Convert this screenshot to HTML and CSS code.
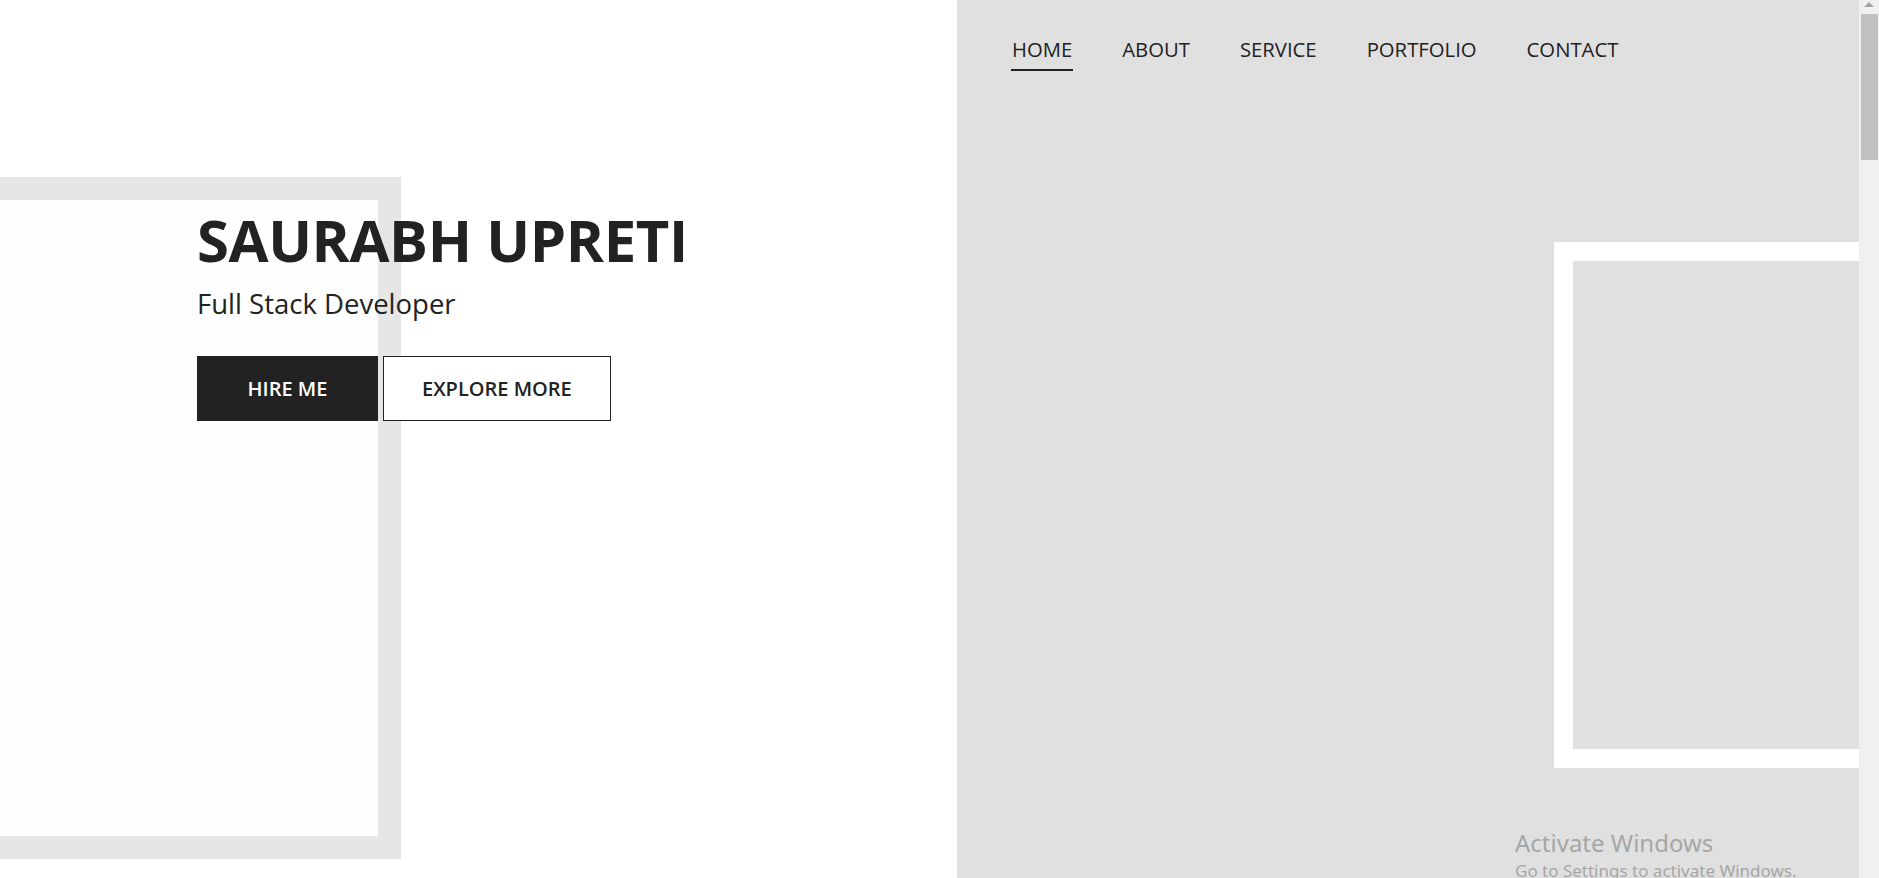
FILE: index.html
```html
<!DOCTYPE html>
<html lang="en">
<head>
<meta charset="utf-8">
<title>Saurabh Upreti</title>
<link rel="stylesheet" href="styles.css">
</head>
<body>
<div class="page">
  <section class="hero-left">
    <div class="frame-left"></div>
    <div class="intro">
      <h1 class="name">SAURABH UPRETI</h1>
      <p class="role">Full Stack Developer</p>
      <div class="actions">
        <a class="btn btn-primary" href="#">HIRE ME</a>
        <a class="btn btn-outline" href="#">EXPLORE MORE</a>
      </div>
    </div>
  </section>
  <section class="hero-right">
    <nav class="nav">
      <a class="nav-link active" href="#">HOME</a>
      <a class="nav-link" href="#">ABOUT</a>
      <a class="nav-link" href="#">SERVICE</a>
      <a class="nav-link" href="#">PORTFOLIO</a>
      <a class="nav-link" href="#">CONTACT</a>
    </nav>
    <div class="frame-right"></div>
    <div class="activate">
      <div class="activate-title">Activate Windows</div>
      <div class="activate-sub">Go to Settings to activate Windows.</div>
    </div>
  </section>
  <div class="scrollbar">
    <div class="scroll-arrow"></div>
    <div class="scroll-thumb"></div>
  </div>
</div>
</body>
</html>
```
FILE: styles.css
```css
* { box-sizing: border-box; }
html, body { margin: 0; padding: 0; }
body {
  font-family: "Open Sans", "Liberation Sans", sans-serif;
  color: #222;
  background: #fff;
  overflow: hidden;
}
.page {
  display: flex;
  width: 1879px;
  height: 878px;
  overflow: hidden;
}
.hero-left {
  position: relative;
  width: 957px;
  flex: none;
  background: #fff;
}
.frame-left {
  position: absolute;
  left: -40px;
  top: 177px;
  width: 441px;
  height: 682px;
  border: 23px solid #e6e6e6;
  border-left: none;
  background: #fefefe;
}
.intro {
  position: relative;
  padding: 200px 0 0 197px;
}
.name {
  margin: 0;
  font-size: 58px;
  font-weight: 700;
  letter-spacing: -0.4px;
  line-height: normal;
  color: #222;
}
.role {
  margin: 6px 0 0;
  font-size: 27.5px;
  font-weight: 400;
  line-height: normal;
  color: #222;
}
.actions {
  display: flex;
  gap: 5px;
  margin-top: 34px;
}
.btn {
  display: flex;
  align-items: center;
  justify-content: center;
  height: 65px;
  padding: 0 38px;
  font-size: 20px;
  font-weight: 600;
  text-decoration: none;
  border: 1px solid #222;
}
.btn-primary {
  min-width: 181px;
  background: #222;
  color: #fff;
}
.btn-outline {
  background: #fff;
  color: #222;
}
.hero-right {
  position: relative;
  flex: 1;
  background: #e0e0e0;
  overflow: hidden;
}
.nav {
  display: flex;
  gap: 50px;
  padding: 35px 0 0 55px;
}
.nav-link {
  position: relative;
  font-size: 20.3px;
  font-weight: 400;
  line-height: normal;
  color: #222;
  text-decoration: none;
  padding-bottom: 8px;
}
.nav-link.active::after {
  content: "";
  position: absolute;
  left: -1px;
  right: -1px;
  bottom: 0;
  height: 2px;
  background: #222;
}
.frame-right {
  position: absolute;
  left: 597px;
  top: 242px;
  width: 400px;
  height: 526px;
  border: 19px solid #fff;
  background: #e0e0e0;
}
.activate {
  position: absolute;
  left: 558px;
  top: 827px;
  color: #a6a6a6;
  font-family: "Noto Sans", "Open Sans", sans-serif;
}
.activate-title {
  font-size: 24px;
  line-height: 32px;
}
.activate-sub {
  font-size: 17px;
  line-height: 24px;
}
.scrollbar {
  position: relative;
  width: 20px;
  flex: none;
  background: #f0f0f0;
}
.scroll-arrow {
  position: absolute;
  left: 5px;
  top: 2px;
  width: 0;
  height: 0;
  border-left: 5px solid transparent;
  border-right: 5px solid transparent;
  border-bottom: 5px solid #a3a3a3;
}
.scroll-thumb {
  position: absolute;
  left: 2px;
  right: 1px;
  top: 14px;
  height: 146px;
  background: #c1c1c1;
}
```
